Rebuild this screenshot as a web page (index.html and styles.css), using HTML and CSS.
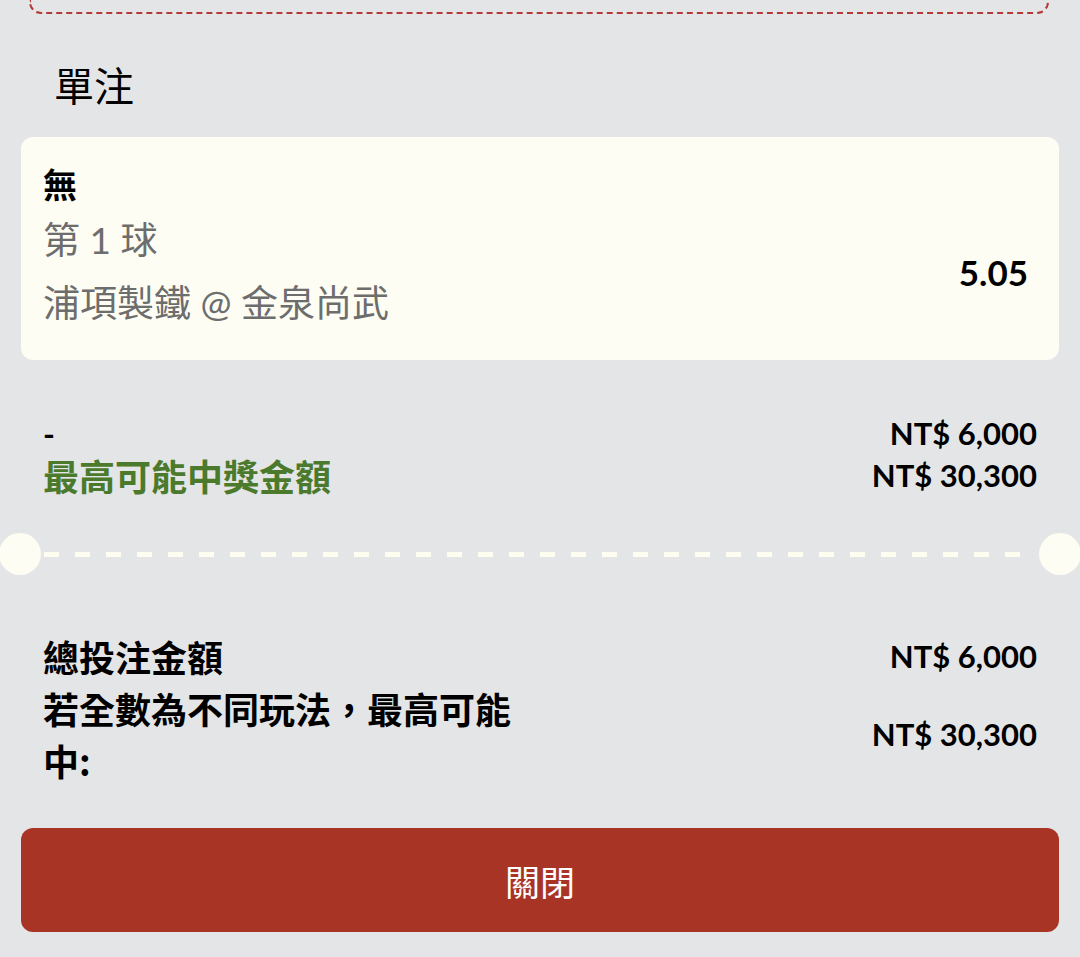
FILE: index.html
```html
<!DOCTYPE html>
<html lang="zh-Hant">
<head>
<meta charset="utf-8">
<title>單注</title>
<link rel="stylesheet" href="styles.css">
</head>
<body>
<div class="prev-box"></div>

<h2 class="section-title">單注</h2>

<div class="bet-card">
  <div class="bet-name">無</div>
  <div class="bet-row">
    <div class="bet-details">
      <div class="bet-market">第 1 球</div>
      <div class="bet-match">浦項製鐵 @ 金泉尚武</div>
    </div>
    <div class="bet-odds">5.05</div>
  </div>
</div>

<div class="stake-block">
  <div class="line">
    <span class="dash">-</span>
    <span class="amount">NT$ 6,000</span>
  </div>
  <div class="line">
    <span class="win-label">最高可能中獎金額</span>
    <span class="amount">NT$ 30,300</span>
  </div>
</div>

<div class="ticket-sep">
  <span class="notch"></span>
  <span class="dashes"></span>
  <span class="notch"></span>
</div>

<div class="totals">
  <div class="total-row">
    <span class="total-label">總投注金額</span>
    <span class="amount">NT$ 6,000</span>
  </div>
  <div class="total-row">
    <span class="total-label">若全數為不同玩法，最高可能中:</span>
    <span class="amount">NT$ 30,300</span>
  </div>
</div>

<button class="close-btn">關閉</button>
</body>
</html>
```

FILE: styles.css
```css
* { box-sizing: border-box; }

html, body {
  margin: 0;
  padding: 0;
}

body {
  background: #e4e5e7;
  font-family: Lato, "Noto Sans CJK TC", sans-serif;
  color: #000;
  width: 1080px;
  height: 957px;
  overflow: hidden;
}

.prev-box {
  height: 14px;
  margin: 0 31px 0 29px;
  border: 2px dashed #b43a3a;
  border-top: none;
  border-radius: 0 0 12px 12px;
}

.section-title {
  margin: 42px 0 0 54px;
  font-family: "Noto Sans CJK TC", sans-serif;
  font-weight: 400;
  font-size: 40px;
  line-height: 56px;
  height: 56px;
}

.bet-card {
  margin: 25px 21px 0 21px;
  height: 223px;
  background: #fdfdf3;
  border-radius: 12px;
  padding: 19px 31px 0 22px;
}

.bet-name {
  font-family: "Noto Sans CJK TC", sans-serif;
  font-weight: 700;
  font-size: 34px;
  line-height: 56px;
}

.bet-row {
  display: flex;
  align-items: center;
  justify-content: space-between;
}

.bet-details {
  color: #6d6d6d;
  font-size: 37px;
}

.bet-market {
  line-height: 56px;
}

.bet-match {
  margin-top: 7px;
  line-height: 56px;
}

.bet-odds {
  font-weight: 700;
  font-size: 35px;
  line-height: 40px;
}

.stake-block {
  margin-top: 52px;
  padding: 0 43px;
}

.line {
  display: flex;
  justify-content: space-between;
  align-items: center;
  height: 42px;
}

.dash {
  font-weight: 700;
  font-size: 32px;
}

.win-label {
  font-family: "Noto Sans CJK TC", sans-serif;
  font-weight: 700;
  font-size: 36px;
  color: #4b7a2c;
}

.amount {
  font-family: Lato, sans-serif;
  font-weight: 700;
  font-size: 31px;
  line-height: 42px;
  white-space: nowrap;
}

.ticket-sep {
  margin-top: 37px;
  height: 42px;
  display: flex;
  align-items: center;
}

.notch {
  flex: 0 0 42px;
  width: 42px;
  height: 42px;
  border-radius: 50%;
  background: #fdfdf3;
}

.ticket-sep .notch:first-child { margin-left: -1px; }
.ticket-sep .notch:last-child { margin-right: -1px; }

.dashes {
  flex: 1;
  height: 5px;
  margin: 0 3px;
  background: repeating-linear-gradient(90deg, #fdfdf0 0 15px, transparent 15px 31px);
}

.totals {
  margin-top: 55px;
  padding: 0 43px;
}

.total-row {
  display: flex;
  justify-content: space-between;
  align-items: center;
}

.total-label {
  width: 500px;
  font-family: "Noto Sans CJK TC", sans-serif;
  font-weight: 700;
  font-size: 36px;
  line-height: 52px;
}

.close-btn {
  display: block;
  width: 1038px;
  height: 104px;
  margin: 42px 21px 0 21px;
  border: none;
  border-radius: 12px;
  background: #a83426;
  color: #fff;
  font-family: "Noto Sans CJK TC", sans-serif;
  font-size: 35px;
  font-weight: 400;
  padding: 0;
}
```
